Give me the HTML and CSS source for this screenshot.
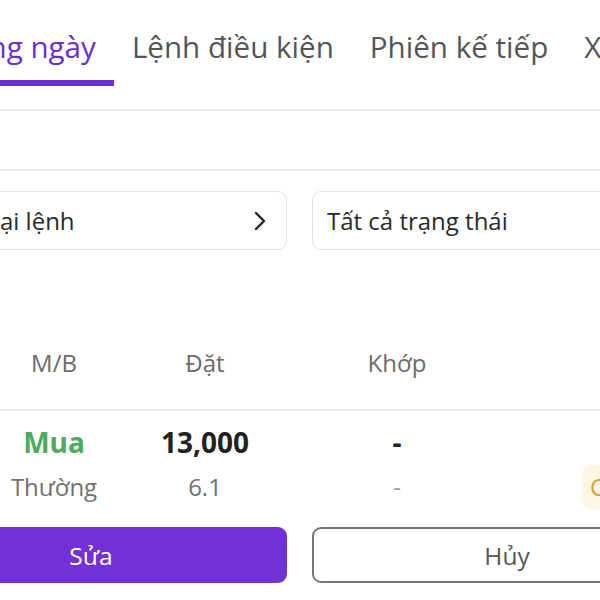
FILE: index.html
```html
<!DOCTYPE html>
<html lang="vi">
<head>
<meta charset="utf-8">
<title>Sổ lệnh</title>
<link rel="stylesheet" href="styles.css">
</head>
<body>
<div class="page">
  <nav class="tabs">
    <div class="tab active">Lệnh trong ngày</div>
    <div class="tab">Lệnh điều kiện</div>
    <div class="tab">Phiên kế tiếp</div>
    <div class="tab">Xác nhận lệnh</div>
  </nav>
  <div class="bar-gap"></div>
  <div class="empty-row"></div>
  <div class="content">
    <div class="filters">
      <div class="select">
        <span>Loại lệnh</span>
        <svg class="chev" viewBox="0 0 14 22" width="14" height="22"><path d="M3 3 L11 11 L3 19" fill="none" stroke="#222" stroke-width="2.4" stroke-linecap="round" stroke-linejoin="round"/></svg>
      </div>
      <div class="select">
        <span>Tất cả trạng thái</span>
      </div>
    </div>
    <div class="grid head">
      <div>M/B</div>
      <div>Đặt</div>
      <div>Khớp</div>
      <div></div>
    </div>
    <div class="grid row-main">
      <div class="buy">Mua</div>
      <div class="strong">13,000</div>
      <div class="strong">-</div>
      <div></div>
    </div>
    <div class="grid row-sub">
      <div>Thường</div>
      <div>6.1</div>
      <div class="faint">-</div>
      <div class="c4"><span class="badge">Chờ khớp</span></div>
    </div>
    <div class="actions">
      <button class="btn primary">Sửa</button>
      <button class="btn outline">Hủy</button>
    </div>
  </div>
</div>
</body>
</html>
```
FILE: styles.css
```css
html, body {
  margin: 0;
  padding: 0;
  background: #fff;
}
body {
  width: 600px;
  height: 600px;
  overflow: hidden;
  font-family: "Open Sans", "Noto Sans", sans-serif;
  color: #222;
}
.page {
  width: 600px;
  overflow: hidden;
}
.tabs {
  display: flex;
  margin-left: -146px;
  height: 86px;
  white-space: nowrap;
}
.tab {
  box-sizing: border-box;
  height: 86px;
  padding: 27px 18px 0;
  font-size: 29.6px;
  line-height: 40px;
  color: #555;
  flex: none;
}
.tab.active {
  color: #6a2fd0;
  border-bottom: 6px solid #6a2fd0;
}
.bar-gap {
  height: 23px;
  border-bottom: 2px solid #ececec;
}
.empty-row {
  height: 58px;
  border-bottom: 2px solid #ececec;
}
.content {
  margin-left: -42px;
  width: 684px;
}
.filters {
  display: grid;
  grid-template-columns: 329px 329px;
  column-gap: 25px;
  margin-top: 20px;
}
.select {
  box-sizing: border-box;
  height: 59px;
  border: 1.5px solid #e3e3e3;
  border-radius: 9px;
  padding: 0 19px 0 14px;
  display: flex;
  align-items: center;
  justify-content: space-between;
  font-size: 24px;
  color: #2a2a2a;
}
.chev {
  display: block;
}
.grid {
  display: grid;
  grid-template-columns: 192px 110px 274px 108px;
  align-items: center;
}
.grid > div {
  text-align: center;
  white-space: nowrap;
}
.head {
  margin-top: 95px;
  height: 34px;
  font-size: 24px;
  color: #6b6b6b;
  padding-bottom: 30px;
  border-bottom: 2px solid #ececec;
}
.row-main {
  height: 45px;
  margin-top: 8px;
  font-size: 28px;
}
.row-sub {
  height: 45px;
  font-size: 24px;
  color: #707070;
}
.buy {
  color: #4caa63;
  font-weight: 700;
}
.strong {
  font-weight: 700;
  color: #222;
}
.faint {
  color: #9a9a9a;
}
.grid > .c4 {
  text-align: left;
}
.badge {
  display: inline-block;
  margin-left: 48px;
  height: 44px;
  line-height: 44px;
  padding: 0 8px;
  border-radius: 9px;
  background: #fdf6e4;
  color: #dba22e;
  font-size: 24px;
  white-space: nowrap;
}
.actions {
  display: grid;
  grid-template-columns: 392px 390px;
  column-gap: 25px;
  margin-left: -63px;
  margin-top: 18px;
}
.btn {
  box-sizing: border-box;
  height: 56px;
  border-radius: 9px;
  font-family: "Open Sans", "Noto Sans", sans-serif;
  font-size: 24.5px;
  padding: 0;
}
.btn.primary {
  background: #7430d7;
  color: #fff;
  border: none;
}
.btn.outline {
  background: #fff;
  color: #555;
  border: 2px solid #777;
}
```
